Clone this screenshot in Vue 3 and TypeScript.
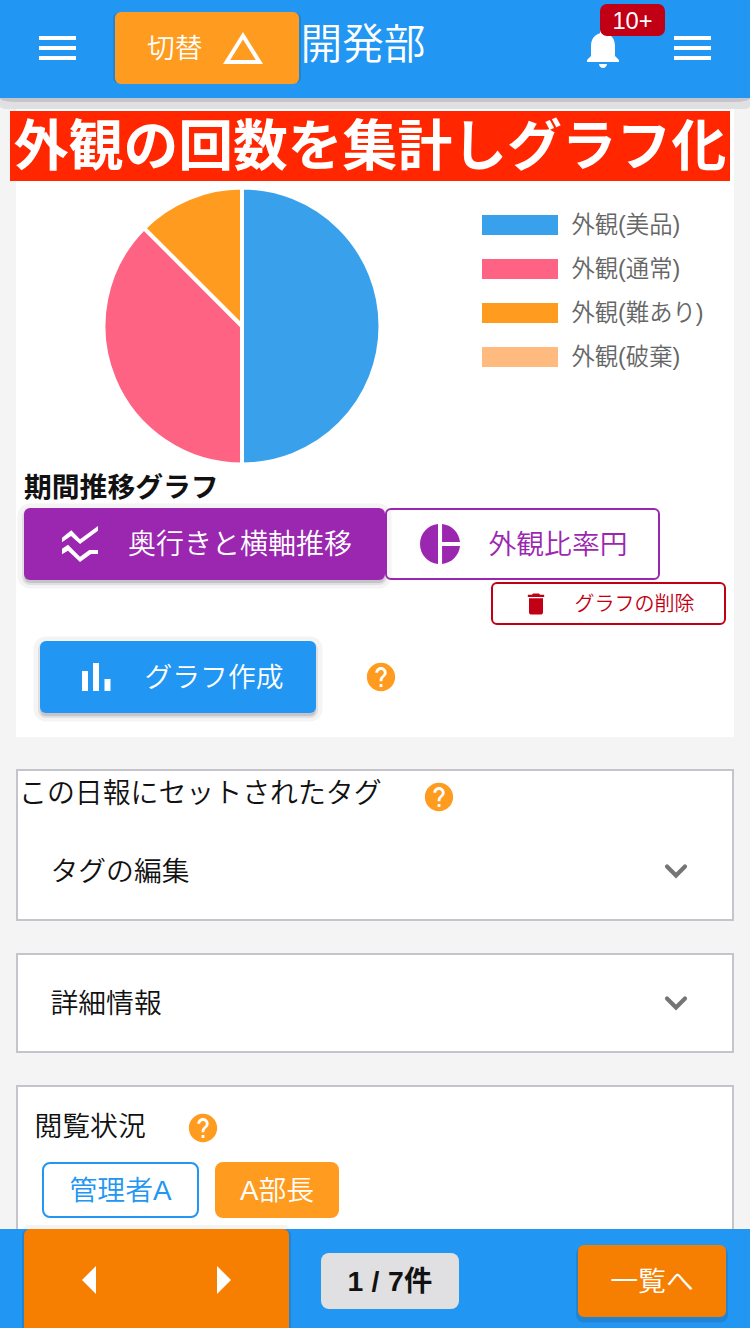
<script setup lang="ts">
interface Slice {
  label: string
  color: string
  value: number
}

const slices: Slice[] = [
  { label: '外観(美品)', color: '#39a0eb', value: 4 },
  { label: '外観(通常)', color: '#ff6384', value: 3 },
  { label: '外観(難あり)', color: '#ff9b1e', value: 1 },
  { label: '外観(破棄)', color: '#ffba80', value: 0 },
]

const R = 138.5
const total = slices.reduce((sum, s) => sum + s.value, 0)

function point(fraction: number): string {
  const a = fraction * Math.PI * 2
  return `${(R * Math.sin(a)).toFixed(2)} ${(-R * Math.cos(a)).toFixed(2)}`
}

let start = 0
const wedges = slices
  .filter((s) => s.value > 0)
  .map((s) => {
    const end = start + s.value / total
    const d = `M0 0L${point(start)}A${R} ${R} 0 0 1 ${point(end)}Z`
    start = end
    return { d, color: s.color }
  })

const helpPath =
  'M12 2C6.48 2 2 6.48 2 12s4.48 10 10 10 10-4.48 10-10S17.52 2 12 2zm1 17h-2v-2h2v2zm2.07-7.75l-.9.92C13.45 12.9 13 13.5 13 15h-2v-.5c0-1.1.45-2.1 1.17-2.83l1.24-1.26c.37-.36.59-.86.59-1.41 0-1.1-.9-2-2-2s-2 .9-2 2H8c0-2.21 1.79-4 4-4s4 1.79 4 4c0 .88-.36 1.68-.93 2.25z'
</script>

<template>
  <div class="app">
    <header class="topbar">
      <button class="menu" aria-label="menu">
        <svg width="37" height="24" viewBox="0 0 37 24"><path d="M0 0h37v4H0zM0 10h37v4H0zM0 20h37v4H0z" /></svg>
      </button>
      <button class="switch">
        <span>切替</span>
        <svg width="48" height="48" viewBox="0 0 24 24"><path d="M12 7.77L18.39 18H5.61L12 7.77M12 4L2 20h20L12 4z" /></svg>
      </button>
      <h1 class="title">開発部</h1>
      <div class="bell">
        <svg width="48" height="48" viewBox="0 0 24 24">
          <path d="M12 22c1.1 0 2-.9 2-2h-4c0 1.1.89 2 2 2zm6-6v-5c0-3.07-1.64-5.64-4.5-6.32V4c0-.83-.67-1.5-1.5-1.5s-1.5.67-1.5 1.5v.68C7.63 5.36 6 7.92 6 11v5l-2 2v1h16v-1l-2-2z" />
        </svg>
        <span class="badge">10+</span>
      </div>
      <button class="menu" aria-label="menu">
        <svg width="37" height="24" viewBox="0 0 37 24"><path d="M0 0h37v4H0zM0 10h37v4H0zM0 20h37v4H0z" /></svg>
      </button>
    </header>

    <main class="content">
      <section class="chart-card">
        <h2 class="banner">外観の回数を集計しグラフ化</h2>
        <div class="chart">
          <svg class="pie" width="280" height="280" viewBox="-140 -140 280 280">
            <path v-for="w in wedges" :key="w.color" :d="w.d" :fill="w.color" stroke="#fff" stroke-width="4" stroke-linejoin="bevel" />
          </svg>
          <ul class="legend">
            <li v-for="s in slices" :key="s.label">
              <i class="swatch" :style="{ background: s.color }"></i>
              <span>{{ s.label }}</span>
            </li>
          </ul>
        </div>
        <h3 class="subtitle">期間推移グラフ</h3>
        <div class="tabs">
          <button class="tab active">
            <svg width="48" height="48" viewBox="0 0 48 48">
              <path d="M6 17.7L15.3 10.3 24 19.3 42 6v4.7L24 24l-9-8.1-9 6.3zM6 28.7l6-4L24 36.7 33.3 30H42v4h-7L24 42 12 30.7 6 34.3z" />
            </svg>
            <span>奥行きと横軸推移</span>
          </button>
          <button class="tab outline">
            <svg width="48" height="48" viewBox="0 0 24 24">
              <path d="M11 2v20c-5.07-.5-9-4.79-9-10s3.93-9.5 9-10zm2.03 0v8.99H22c-.47-4.74-4.24-8.52-8.97-8.99zm0 11.01V22c4.74-.47 8.5-4.25 8.97-8.99h-8.97z" />
            </svg>
            <span>外観比率円</span>
          </button>
        </div>
        <div class="delete-row">
          <button class="delete">
            <svg width="28" height="28" viewBox="0 0 24 24"><path d="M6 19c0 1.1.9 2 2 2h8c1.1 0 2-.9 2-2V7H6v12zM19 4h-3.5l-1-1h-5l-1 1H5v2h14V4z" /></svg>
            <span>グラフの削除</span>
          </button>
        </div>
        <div class="create-row">
          <button class="create">
            <svg width="29" height="28" viewBox="0 0 29 28"><path d="M0 8h6v20H0zM11 0h6v28h-6zM22.5 16h6v12h-6z" /></svg>
            <span>グラフ作成</span>
          </button>
          <svg class="help" width="34" height="34" viewBox="0 0 24 24"><path :d="helpPath" /></svg>
        </div>
      </section>

      <section class="panel tags">
        <div class="tags-head">
          <span>この日報にセットされたタグ</span>
          <svg class="help" width="34" height="34" viewBox="0 0 24 24"><path :d="helpPath" /></svg>
        </div>
        <div class="expander">
          <span>タグの編集</span>
          <svg width="24" height="16" viewBox="0 0 24 16"><path class="chevron" d="M3 3.5l9 9 9-9" /></svg>
        </div>
      </section>

      <section class="panel details">
        <div class="expander">
          <span>詳細情報</span>
          <svg width="24" height="16" viewBox="0 0 24 16"><path class="chevron" d="M3 3.5l9 9 9-9" /></svg>
        </div>
      </section>

      <section class="panel readers">
        <div class="readers-head">
          <span>閲覧状況</span>
          <svg class="help" width="34" height="34" viewBox="0 0 24 24"><path :d="helpPath" /></svg>
        </div>
        <div class="chips">
          <span class="chip unread">管理者A</span>
          <span class="chip read">A部長</span>
        </div>
      </section>
    </main>

    <footer class="bottombar">
      <div class="pager">
        <button aria-label="previous"><svg width="14" height="28" viewBox="0 0 14 28"><path d="M14 0v28L0 14z" /></svg></button>
        <button aria-label="next"><svg width="14" height="28" viewBox="0 0 14 28"><path d="M0 0v28l14-14z" /></svg></button>
      </div>
      <span class="count">1 / 7件</span>
      <button class="list">一覧へ</button>
    </footer>
  </div>
</template>

<style>
body {
  margin: 0;
  background: #f4f4f4;
}
</style>

<style scoped>
.app {
  width: 750px;
  height: 1328px;
  display: flex;
  flex-direction: column;
  overflow: hidden;
  background: #f4f4f4;
  color: #111;
  font-family: 'Liberation Sans', 'Noto Sans CJK JP', sans-serif;
  font-size: 27.8px;
  font-weight: 350;
  white-space: nowrap;
}
.app * {
  box-sizing: border-box;
}
button {
  font: inherit;
  color: inherit;
  border: 0;
  padding: 0;
  background: none;
}
svg {
  display: block;
  fill: currentColor;
  flex: none;
}
h1,
h2,
h3,
ul {
  margin: 0;
  padding: 0;
  list-style: none;
}

.topbar {
  position: relative;
  z-index: 2;
  flex: none;
  height: 98px;
  display: flex;
  align-items: flex-start;
  padding: 0 39px;
  background: #2196f3;
  color: #fff;
}
.topbar::after {
  content: '';
  position: absolute;
  inset: 98px 0 auto;
  height: 4px;
  border-radius: 0 0 16px 16px / 0 0 4px 4px;
  background: #c5c4ca;
}
.topbar::before {
  content: '';
  position: absolute;
  inset: 98px 0 auto;
  height: 11px;
  border-radius: 0 0 6px 6px / 0 0 3px 3px;
  background: #e0dfe1;
}
.menu {
  margin-top: 36px;
}
.switch {
  display: flex;
  align-items: center;
  width: 184px;
  height: 72px;
  margin: 12px 0 0 39px;
  padding-left: 32px;
  gap: 16px;
  border-radius: 6px;
  background: #ff9b1e;
  box-shadow: 3px 0 0 -1px #2384d3, -3px 0 0 -1px #2384d3;
}
.switch span,
.tab span,
.create span {
  line-height: 1;
  padding-top: 2px;
}
.delete span {
  line-height: 1;
  padding-left: 0.5px;
}
.title {
  flex: 1;
  margin-left: 1.5px;
  font-size: 41.7px;
  font-weight: 350;
  line-height: 62px;
  margin-top: 14px;
}
.bell {
  position: relative;
  margin: 24px 47px 0 0;
}
.badge {
  position: absolute;
  left: 21px;
  top: -20px;
  width: 65px;
  height: 32px;
  border-radius: 7px;
  background: #c10015;
  font-size: 23.7px;
  line-height: 34px;
  text-align: center;
}

.content {
  flex: 1;
  min-height: 0;
  overflow: hidden;
  padding: 0 16px;
}
.chart-card {
  height: 639px;
  padding-top: 13px;
  background: #fff;
}
.banner {
  height: 70px;
  margin: 0 4px 0 -6px;
  background: #ff2600;
  color: #fff;
  font-size: 54.8px;
  font-weight: 700;
  line-height: 71px;
  text-align: center;
}
.chart {
  display: flex;
  align-items: flex-start;
  height: 286px;
  padding: 4.5px 0 0 86px;
}
.legend {
  margin: 17.5px 0 0 99.5px;
}
.legend li {
  display: flex;
  align-items: center;
  height: 44px;
  gap: 14px;
  color: #666;
  font-size: 23.3px;
}
.legend span {
  padding-bottom: 4px;
}
.swatch {
  width: 76px;
  height: 20px;
}
.subtitle {
  height: 41px;
  padding-left: 8px;
  font-size: 27.8px;
  font-weight: 700;
  line-height: 41px;
}
.tabs {
  display: flex;
  margin-left: 8px;
}
.tab {
  display: flex;
  align-items: center;
  height: 72px;
  border-radius: 6px;
  font-size: 28px;
}
.tab.active {
  width: 361px;
  padding-left: 32px;
  gap: 24px;
  background: #9b27b0;
  color: #fff;
  box-shadow: 0 3px 0 0 #c5c4ca, 0 3px 0 2px #e0dfe1, 0 2px 0 6.5px #f4f4f4;
}
.tab.outline {
  position: relative;
  width: 275px;
  padding-left: 29px;
  gap: 24.5px;
  border: 2px solid #9b27b0;
  color: #9b27b0;
  font-size: 27.8px;
}
.delete-row {
  display: flex;
  justify-content: flex-end;
  padding: 2px 8px 0 0;
}
.delete {
  display: flex;
  align-items: center;
  width: 235px;
  height: 43px;
  padding-left: 29px;
  gap: 24px;
  border: 2px solid #c10015;
  border-radius: 6px;
  color: #c10015;
  font-size: 20px;
}
.create-row {
  display: flex;
  align-items: center;
  gap: 48px;
  margin: 16px 0 0 24px;
}
.create {
  display: flex;
  align-items: center;
  width: 276px;
  height: 72px;
  padding-left: 42px;
  gap: 33.5px;
  border-radius: 6px;
  background: #2196f3;
  color: #fff;
  box-shadow: 0 3px 0 0 #c5c4ca, 0 3px 0 2px #e0dfe1, 0 2px 0 6.5px #f4f4f4;
}
.help {
  color: #ff9b1e;
}
.panel {
  margin-top: 32px;
  border: 2px solid #c5c4ca;
  background: #fff;
}
.tags {
  height: 152px;
}
.tags-head {
  display: flex;
  height: 50px;
  gap: 40.5px;
  padding-left: 1px;
  font-size: 27.9px;
  line-height: 46px;
}
.tags-head .help {
  margin-top: 9px;
}
.expander {
  display: flex;
  align-items: center;
  justify-content: space-between;
  height: 96px;
  padding: 0 44px 0 32.5px;
}
.tags .expander span {
  margin-top: -1px;
}
.expander svg {
  margin-top: 3px;
}
.details .expander svg {
  margin-top: 0;
}
.details .expander span {
  margin-top: -4px;
}
.chevron {
  fill: none;
  stroke: #757575;
  stroke-width: 4.2;
  stroke-linecap: round;
}
.details {
  height: 100px;
}
.readers {
  height: 200px;
}
.readers-head {
  display: flex;
  height: 75px;
  gap: 40.5px;
  padding-left: 16.5px;
  line-height: 79px;
}
.readers-head .help {
  margin-top: 24px;
}
.chips {
  display: flex;
  gap: 16px;
  padding-left: 24px;
}
.chip {
  height: 56px;
  border-radius: 8px;
  line-height: 58px;
  text-align: center;
}
.unread {
  width: 157px;
  border: 2px solid #2196f3;
  line-height: 54px;
  color: #2196f3;
}
.read {
  width: 124px;
  background: #ff9b1e;
  color: #fff;
}

.bottombar {
  position: relative;
  z-index: 2;
  flex: none;
  display: flex;
  align-items: flex-start;
  height: 99px;
  padding: 0 24px;
  background: #2196f3;
}
.bottombar::before {
  content: '';
  position: absolute;
  left: 24px;
  top: -4px;
  width: 265px;
  height: 4px;
  border-radius: 4px 4px 0 0;
  background: #f4f4f4;
}
.pager {
  display: flex;
  width: 265px;
  height: 110px;
  padding: 37px 58px 0;
  justify-content: space-between;
  align-items: flex-start;
  border-radius: 6px;
  background: #f67f01;
  color: #fff;
  box-shadow: 3px 0 0 -1px #2384d3, -3px 0 0 -1px #2384d3;
}
.count {
  width: 138px;
  height: 56px;
  margin: 24px 0 0 32px;
  border-radius: 8px;
  background: #e0dfe1;
  font-size: 28.3px;
  font-weight: 700;
  letter-spacing: 0.3px;
  line-height: 57px;
  text-align: center;
}
.list {
  width: 148px;
  height: 72px;
  margin: 16px 0 0 auto;
  padding-bottom: 5px;
  border-radius: 6px;
  background: #f67f01;
  color: #fff;
  box-shadow: 0 3.5px 0 2px #2384d3;
}
</style>
